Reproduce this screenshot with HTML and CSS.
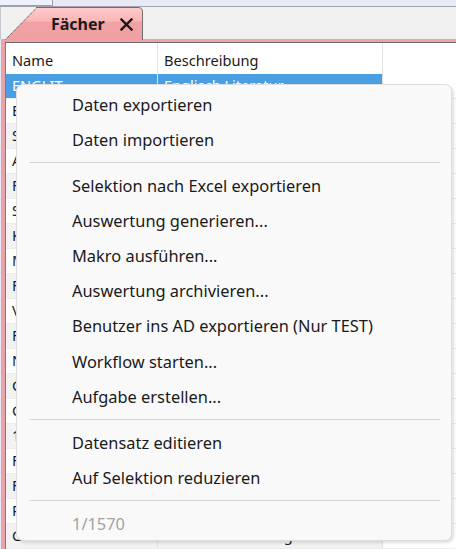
FILE: index.html
```html
<!DOCTYPE html>
<html lang="de">
<head>
  <meta charset="UTF-8" />
  <title>Fächer</title>
  <link rel="stylesheet" href="styles.css">
</head>
<body>

<div class="titlebar"><div class="titlebar-box"></div></div>

<div class="tabstrip">
  <div class="tab">
    <svg class="tab-shape" width="138" height="33" viewBox="0 0 138 33">
      <defs>
        <linearGradient id="tabFill" x1="0" y1="0" x2="0" y2="1">
          <stop offset="0" stop-color="#ffcaca"/>
          <stop offset="0.4" stop-color="#fbb6b6"/>
          <stop offset="0.45" stop-color="#f1a2a4"/>
          <stop offset="1" stop-color="#ef9fa2"/>
        </linearGradient>
      </defs>
      <path d="M0 33 L31 1 H133 Q137 1 137 5 V33 Z" fill="url(#tabFill)"/>
      <path d="M0.5 32.5 L31 1.5" stroke="#3a3a3a" stroke-width="1" stroke-dasharray="1 1"/>
      <path d="M31 0.5 H133 Q137.5 0.5 137.5 5 V33" fill="none" stroke="#6e6e6e" stroke-width="1"/>
    </svg>
    <span class="tab-title">Fächer</span>
    <svg class="tab-close" width="13" height="13" viewBox="0 0 13 13">
      <path d="M1.5 1.5 L11.5 11.5 M11.5 1.5 L1.5 11.5" stroke="#1a1a1a" stroke-width="2.4" stroke-linecap="square"/>
    </svg>
  </div>
</div>

<div class="panel">
  <div class="grid" id="grid">
    <div class="row header">
      <div class="cell name">Name</div>
      <div class="cell desc">Beschreibung</div>
      <div class="cell fill"></div>
    </div>
  </div>
</div>

<!-- Kontextmenü der Tabelle -->
<div class="menu">
  <div class="item">Daten exportieren</div>
  <div class="item">Daten importieren</div>
  <div class="sep"></div>
  <div class="item">Selektion nach Excel exportieren</div>
  <div class="item">Auswertung generieren...</div>
  <div class="item">Makro ausführen...</div>
  <div class="item">Auswertung archivieren...</div>
  <div class="item">Benutzer ins AD exportieren (Nur TEST)</div>
  <div class="item">Workflow starten...</div>
  <div class="item">Aufgabe erstellen...</div>
  <div class="sep"></div>
  <div class="item">Datensatz editieren</div>
  <div class="item">Auf Selektion reduzieren</div>
  <div class="sep"></div>
  <div class="item disabled">1/1570</div>
</div>

<script>
  const rows = [
    ['ENGLIT', 'Englisch Literatur'],
    ['ETH', 'Ethik'],
    ['SPO', 'Sport'],
    ['AST', 'Astronomie'],
    ['FRZ', 'Französisch'],
    ['SPA', 'Spanisch'],
    ['KUN', 'Kunst'],
    ['MUS', 'Musik'],
    ['FOT', 'Fotografie'],
    ['VWL', 'Volkswirtschaft'],
    ['FILM', 'Filmkunde'],
    ['NAWI', 'Naturwissenschaften'],
    ['GES', 'Geschichte'],
    ['GEO', 'Geografie'],
    ['1FS', '1. Fremdsprache'],
    ['FRZ2', 'Französisch 2'],
    ['FRZ3', 'Französisch 3'],
    ['PHI', 'Philosophie'],
    ['GRA', 'Grafik - Gestaltung']
  ];

  const grid = document.getElementById('grid');
  rows.forEach(([name, desc], i) => {
    const row = document.createElement('div');
    row.className = 'row' + (i === 0 ? ' selected' : '') + (i % 2 === 0 ? ' alt' : '');
    row.innerHTML = `<div class="cell name">${name}</div><div class="cell desc">${desc}</div><div class="cell fill"></div>`;
    grid.appendChild(row);
  });
</script>
</body>
</html>
```

FILE: styles.css
```css
* {
  box-sizing: border-box;
}

body {
  margin: 0;
  height: 549px;
  overflow: hidden;
  position: relative;
  background-color: #e7e9f7;
  font-family: 'Noto Sans', sans-serif;
  color: #1b1b1b;
}

.titlebar {
  height: 7px;
  border-bottom: 1px solid #a4a4ab;
}

.titlebar-box {
  width: 53px;
  height: 6px;
  background-color: #eef0fb;
  border-right: 1px solid #9c9caa;
  border-bottom: 1px solid #9c9caa;
}

.tabstrip {
  height: 32px;
  display: flex;
  align-items: flex-end;
  padding-left: 4px;
  background-color: #f0f0f0;
  border-left: 1px solid #c6c6ce;
}

.tab {
  position: relative;
  width: 138px;
  height: 33px;
  margin-bottom: -1px;
  display: flex;
  align-items: center;
  padding-left: 46px;
}

.tab-shape {
  position: absolute;
  top: 0;
  left: 0;
}

.tab-title {
  position: relative;
  font-weight: bold;
  font-size: 16px;
  margin-top: 1px;
}

.tab-close {
  position: relative;
  margin-left: 15px;
  margin-top: 2px;
}

.panel {
  margin-left: 1px;
  border-left: 4px solid #eaa3a8;
  border-top: 3px solid #eda3a6;
  height: 510px;
}

.grid {
  height: 100%;
  background-color: #ffffff;
  border-left: 1px solid #7c7c7c;
  border-top: 1px solid #6a6a6a;
}

.row {
  display: flex;
  height: 25px;
  border-bottom: 1px solid #ececec;
  font-size: 14.6px;
}

.row.alt {
  background-color: #f2f2f2;
}

.row.header {
  height: 31px;
  border-bottom: none;
  background-color: #ffffff;
}

.row.header .cell {
  padding-top: 6px;
}

.cell {
  padding: 0 0 0 6px;
  white-space: nowrap;
  overflow: hidden;
  line-height: 22px;
}

.cell.name {
  width: 152px;
  border-right: 1px solid #e2e2e2;
}

.cell.desc {
  width: 225px;
  border-right: 1px solid #e2e2e2;
}

.cell.fill {
  flex: 1;
  background-color: #ffffff;
}

.row.selected .name,
.row.selected .desc {
  background-color: #4a9fe3;
  color: #ffffff;
}

.menu {
  position: absolute;
  left: 16px;
  top: 84px;
  width: 436px;
  height: 457px;
  padding: 1.5px 0 0;
  background-color: #f9f9f9;
  border: 1px solid #dedede;
  border-radius: 7px;
  box-shadow: 2px 2px 3px rgba(0, 0, 0, 0.12);
}

.item {
  height: 35.2px;
  line-height: 35px;
  padding-left: 55px;
  font-size: 16.4px;
  color: #1a1a1a;
}

.item.disabled {
  color: #a3a3a3;
}

.sep {
  height: 10.8px;
  margin: 0 11px 0 12px;
  background: linear-gradient(#d6d6d6, #d6d6d6) no-repeat 0 5px / 100% 1px;
}
```
